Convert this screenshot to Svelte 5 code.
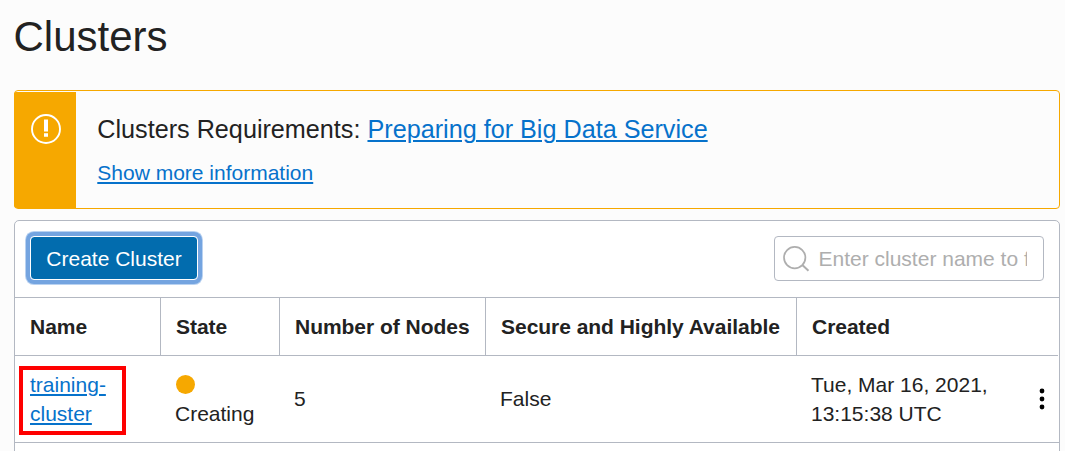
<script>
  const clusters = [
    { name: 'training-cluster', state: 'Creating', nodes: 5, secure: 'False', created: 'Tue, Mar 16, 2021, 13:15:38 UTC' }
  ];
  const headers = ['Name', 'State', 'Number of Nodes', 'Secure and Highly Available', 'Created'];
</script>

<main>
  <h1>Clusters</h1>

  <section class="alert">
    <div class="stripe">
      <svg width="30" height="30" viewBox="0 0 30 30" fill="none">
        <circle cx="15" cy="15" r="14" stroke="#fff" stroke-width="1.9" />
        <path d="M13 5.5h4v12h-4zM13 19.3h4v3.5h-4z" fill="#fff" />
      </svg>
    </div>
    <div class="message">
      <p class="title">Clusters Requirements: <a href="#prepare">Preparing for Big Data Service</a></p>
      <p class="more"><a href="#more">Show more information</a></p>
    </div>
  </section>

  <section class="panel">
    <div class="toolbar">
      <button>Create Cluster</button>
      <label class="search">
        <svg width="27" height="27" viewBox="0 0 27 27" fill="none" stroke="#aeaeae" stroke-width="1.7">
          <circle cx="11.7" cy="12.6" r="10.7" />
          <path d="M19.3 20l6.2 5.8" stroke-width="2" />
        </svg>
        <input type="text" placeholder="Enter cluster name to filter" />
      </label>
    </div>
    <div class="row head">
      {#each headers as h}
        <div class="th">{h}</div>
      {/each}
    </div>
    {#each clusters as c}
      <div class="row body">
        <div class="td name"><a href="#cluster">{c.name}</a><span class="mark"></span></div>
        <div class="td state"><span class="dot"></span><span>{c.state}</span></div>
        <div class="td single">{c.nodes}</div>
        <div class="td single">{c.secure}</div>
        <div class="td created">
          <span>{c.created}</span>
          <svg width="6" height="22" viewBox="0 0 6 22">
            <circle cx="3" cy="3" r="2.4" /><circle cx="3" cy="11" r="2.4" /><circle cx="3" cy="19" r="2.4" />
          </svg>
        </div>
      </div>
    {/each}
  </section>
</main>

<style>
  :global(body) { background: #fcfcfc; overflow: hidden; }
  main {
    box-sizing: border-box;
    width: 1065px;
    height: 451px;
    padding: 11px 5px 0 14px;
    overflow: hidden;
    display: flex;
    flex-direction: column;
    font: 21px/29px "Liberation Sans", Arial, sans-serif;
    color: #222;
  }
  h1 { margin: 0 0 27px -0.5px; font-size: 42px; line-height: 52px; font-weight: 400; flex: none; }
  p { margin: 0; }
  a { color: #0672cb; text-decoration: underline; text-decoration-thickness: 2px; text-underline-offset: 2px; }
  .alert {
    box-sizing: border-box;
    height: 119px;
    flex: none;
    display: flex;
    border: 1px solid #f6a800;
    border-radius: 4px;
  }
  .stripe {
    box-sizing: border-box;
    width: 62px;
    margin: 1px 0 0 -1px;
    padding: 22px 0 0 17px;
    background: #f6a800;
    border-radius: 2px 0 0 3px;
  }
  .stripe svg { display: block; }
  .message { padding: 20px 0 0 21.3px; }
  .title { font-size: 25.2px; line-height: 36px; }
  .more { margin-top: 11px; }
  .panel {
    box-sizing: border-box;
    flex: none;
    height: 260px;
    margin-top: 11px;
    background: #fff;
    border: 1px solid #b3b8c2;
    border-radius: 5px;
  }
  .toolbar {
    box-sizing: border-box;
    height: 77px;
    padding: 15px 15px 0;
    display: flex;
    justify-content: space-between;
    align-items: flex-start;
    border-bottom: 1px solid #b3b8c2;
  }
  button {
    box-sizing: border-box;
    width: 168px;
    height: 44px;
    padding: 0;
    border: 1px solid #fff;
    border-radius: 4px;
    background: #026cae;
    background-clip: padding-box;
    color: #fff;
    font: inherit;
    box-shadow: 0 0 0 4px #74a4e0, 0 0 0 5px #b9d2f1;
  }
  .search {
    box-sizing: border-box;
    width: 270px;
    height: 45px;
    padding: 0 16px 0 8px;
    display: flex;
    align-items: center;
    gap: 8.5px;
    border: 1px solid #b3b8c2;
    border-radius: 4px;
  }
  .search svg { flex: none; }
  input {
    flex: 1;
    min-width: 0;
    padding: 0;
    border: 0;
    outline: 0;
    background: none;
    font: inherit;
  }
  input::placeholder { color: #aeaeae; opacity: 1; }
  .row { display: grid; grid-template-columns: 146px 119px 206px 311px 1fr; }
  .head { height: 58px; box-sizing: border-box; border-bottom: 1px solid #b3b8c2; margin-right: 1px; }
  .th {
    padding-left: 15px;
    font-weight: 700;
    line-height: 58px;
    letter-spacing: -0.03px;
    border-right: 1px solid #b3b8c2;
    white-space: nowrap;
    height: 57px;
  }
  .th:last-child { border-right: 0; }
  .body { height: 87px; box-sizing: border-box; border-bottom: 1px solid #b3b8c2; align-items: center; }
  .td { padding-left: 14px; }
  .single { padding-bottom: 2px; }
  .name { position: relative; padding: 0 50px 0 15px; }
  .mark {
    position: absolute;
    left: 3.6px;
    top: -4px;
    width: 99px;
    height: 61px;
    border: 4px solid #fe0000;
  }
  .state { display: flex; flex-direction: column; }
  .dot { width: 19px; height: 19px; margin: 5px 0 5px 1px; border-radius: 50%; background: #f6a800; }
  .created { display: flex; align-items: center; justify-content: space-between; padding-right: 14px; }
  .created span { width: 190px; }
</style>
